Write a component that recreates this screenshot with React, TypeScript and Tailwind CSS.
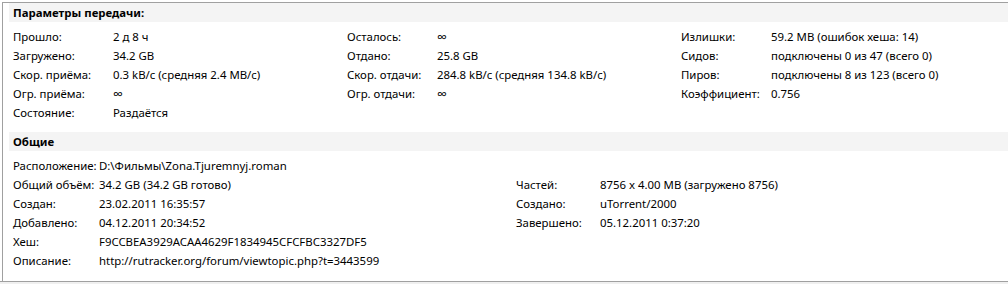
const transfer = [
  [
    ["Прошло:", "2 д 8 ч"],
    ["Загружено:", "34.2 GB"],
    ["Скор. приёма:", "0.3 kB/c (средняя 2.4 MB/c)"],
    ["Огр. приёма:", "∞"],
    ["Состояние:", "Раздаётся"],
  ],
  [
    ["Осталось:", "∞"],
    ["Отдано:", "25.8 GB"],
    ["Скор. отдачи:", "284.8 kB/c (средняя 134.8 kB/c)"],
    ["Огр. отдачи:", "∞"],
  ],
  [
    ["Излишки:", "59.2 MB (ошибок хеша: 14)"],
    ["Сидов:", "подключены 0 из 47 (всего 0)"],
    ["Пиров:", "подключены 8 из 123 (всего 0)"],
    ["Коэффициент:", "0.756"],
  ],
];

const labelWidths = ["w-[100px]", "w-[90px]", "w-[90px]"];

function Row({ label, value, labelClass }: { label: string; value: string; labelClass: string }) {
  return (
    <div className="flex h-[19px] items-center whitespace-nowrap">
      <span className={labelClass + " shrink-0"}>{label}</span>
      {value === "∞" ? <span className="text-[14px] leading-none">∞</span> : <span>{value}</span>}
    </div>
  );
}

function Header({ title }: { title: string }) {
  return (
    <div className="h-[19px] bg-[#f4f4f4] pl-[4px] font-bold leading-[19px]">{title}</div>
  );
}

export default function App() {
  return (
    <div
      className="w-[1008px] h-[284px] bg-white overflow-hidden text-[11.4px] text-black"
      style={{ fontFamily: '"Noto Sans", "Open Sans", sans-serif' }}
    >
      <div className="mt-[2px] ml-[2px] h-[279px] border-t border-l border-[#a0a0a0] pl-[6px]">
        <Header title="Параметры передачи:" />
        <div className="grid grid-cols-[334px_334px_1fr] pl-[4px] pt-[5px]">
          {transfer.map((col, i) => (
            <div key={i} className="flex flex-col">
              {col.map(([l, v]) => (
                <Row key={l} label={l} value={v} labelClass={labelWidths[i]} />
              ))}
            </div>
          ))}
        </div>

        <div className="mt-[10px]">
          <Header title="Общие" />
        </div>
        <div className="pl-[4px] pt-[5px]">
          <Row label="Расположение:" value="D:\Фильмы\Zona.Tjuremnyj.roman" labelClass="w-[86px]" />
          <div className="grid grid-cols-[503px_1fr]">
            <div className="flex flex-col">
              <Row label="Общий объём:" value="34.2 GB (34.2 GB готово)" labelClass="w-[86px]" />
              <Row label="Создан:" value="23.02.2011 16:35:57" labelClass="w-[86px]" />
              <Row label="Добавлено:" value="04.12.2011 20:34:52" labelClass="w-[86px]" />
            </div>
            <div className="flex flex-col">
              <Row label="Частей:" value="8756 x 4.00 MB (загружено 8756)" labelClass="w-[84px]" />
              <Row label="Создано:" value="uTorrent/2000" labelClass="w-[84px]" />
              <Row label="Завершено:" value="05.12.2011 0:37:20" labelClass="w-[84px]" />
            </div>
          </div>
          <Row label="Хеш:" value="F9CCBEA3929ACAA4629F1834945CFCFBC3327DF5" labelClass="w-[86px]" />
          <Row label="Описание:" value="http://rutracker.org/forum/viewtopic.php?t=3443599" labelClass="w-[86px]" />
        </div>
      </div>
      <div className="h-[3px] border-t border-[#a0a0a0] bg-[#f0f0f0]" />
    </div>
  );
}
